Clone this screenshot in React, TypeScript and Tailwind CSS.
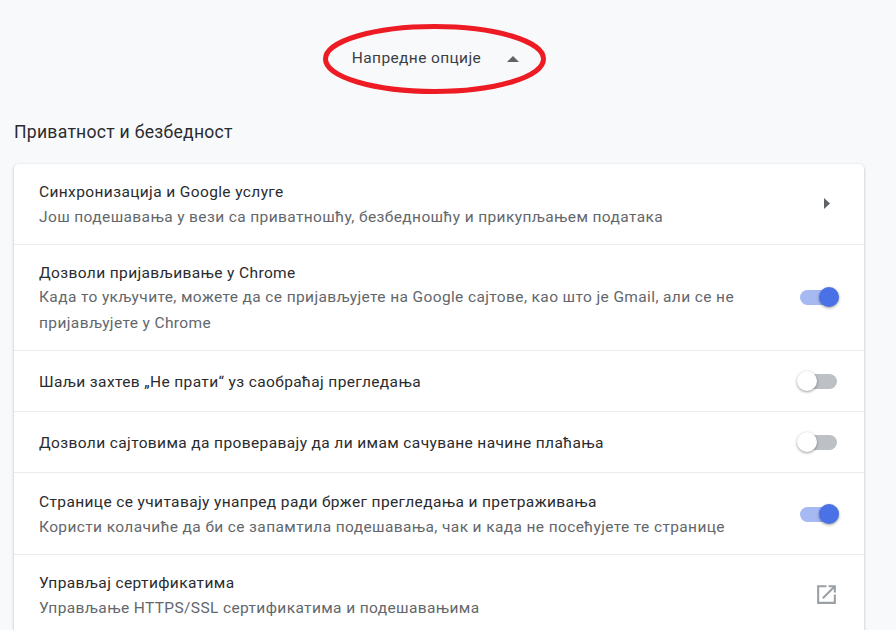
import React from 'react';

function Toggle({ on, className = '' }: { on: boolean; className?: string }) {
  return (
    <div className={`relative w-[37px] h-[15px] shrink-0 ${className}`}>
      <div className={`absolute inset-0 rounded-full ${on ? 'bg-[#a6b9f2]' : 'bg-[#bdc1c6]'}`} />
      <div
        className={`absolute top-[-3px] w-[20px] h-[20px] rounded-full shadow-[0_1px_3px_rgba(0,0,0,0.4)] ${
          on ? 'right-[-2px] bg-[#4a72e6]' : 'left-[-3px] bg-white'
        }`}
      />
    </div>
  );
}

function Row({
  title,
  sub,
  h,
  right,
  last,
  top = 'pt-[2px]',
  gap = 'mt-[1px]',
}: {
  title: string;
  sub?: React.ReactNode;
  h: string;
  right: React.ReactNode;
  last?: boolean;
  top?: string;
  gap?: string;
}) {
  return (
    <div className={`flex items-center pl-[25px] pr-[27px] ${h} ${last ? '' : 'border-b border-[#ebebeb]'}`}>
      <div className={`flex-1 min-w-0 text-[15.5px] tracking-[0.38px] ${top}`}>
        <div className="leading-[22px] text-[#2a2b2e]">{title}</div>
        {sub && <div className={`leading-[26px] text-[#63676c] ${gap}`}>{sub}</div>}
      </div>
      <div className="flex justify-end items-center w-[60px] shrink-0">{right}</div>
    </div>
  );
}

export default function App() {
  return (
    <div className="relative w-[896px] h-[630px] overflow-hidden bg-[#f8f9fb] font-['Roboto',sans-serif]">
      <div className="flex justify-center items-center h-[118px] pr-[25px]">
        <div className="flex items-center gap-[26px]">
          <span className="text-[15.5px] tracking-[0.38px] text-[#3c4043]">Напредне опције</span>
          <svg width="12" height="6" viewBox="0 0 12 6">
            <path d="M0 6 L6 0 L12 6 Z" fill="#5f6368" />
          </svg>
        </div>
      </div>
      <svg className="absolute left-[320px] top-[20px]" width="230" height="78" viewBox="0 0 230 78">
        <ellipse cx="114.500" cy="39" rx="109" ry="32.500" fill="none" stroke="#ed1c24" strokeWidth="5" />
      </svg>

      <h2 className="pl-[14px] h-[46px] text-[17.6px] leading-[28px] tracking-[0.26px] font-normal text-[#2a2b2e]">
        Приватност и безбедност
      </h2>

      <div className="ml-[14px] w-[850px] rounded-[5px] bg-white shadow-[0_1px_3px_rgba(60,64,67,0.35)]">
        <Row
          h="h-[81px]"
          title="Синхронизација и Google услуге"
          sub="Још подешавања у вези са приватношћу, безбедношћу и прикупљањем података"
          right={
            <svg className="mr-[7px] -mt-[2px]" width="6" height="11" viewBox="0 0 6 11">
              <path d="M0 0 L6 5.500 L0 11 Z" fill="#5f6368" />
            </svg>
          }
        />
        <Row
          h="h-[106px]"
          top="pt-[3px]"
          gap="mt-0"
          title="Дозволи пријављивање у Chrome"
          sub={
            <>
              Када то укључите, можете да се пријављујете на Google сајтове, као што је Gmail, али се не
              <br />
              пријављујете у Chrome
            </>
          }
          right={<Toggle on />}
        />
        <Row h="h-[61px]" title="Шаљи захтев „Не прати“ уз саобраћај прегледања" right={<Toggle on={false} />} />
        <Row h="h-[61px]" title="Дозволи сајтовима да проверавају да ли имам сачуване начине плаћања" right={<Toggle on={false} />} />
        <Row
          h="h-[82px]"
          top="pt-[4px]"
          title="Странице се учитавају унапред ради бржег прегледања и претраживања"
          sub="Користи колачиће да би се запамтила подешавања, чак и када не посећујете те странице"
          right={<Toggle on className="mt-[2px]" />}
        />
        <Row
          h="h-[80px]"
          last
          title="Управљај сертификатима"
          sub="Управљање HTTPS/SSL сертификатима и подешавањима"
          right={
            <svg width="25" height="25" viewBox="0 0 24 24" className="-mr-[2px] -mt-[1px]">
              <path
                d="M19 19H5V5h7V3H3v18h18v-9h-2v7zM14 3v2h3.590l-9.830 9.830 1.410 1.410L19 6.410V10h2V3h-7z"
                fill="#9aa0a6"
              />
            </svg>
          }
        />
      </div>
    </div>
  );
}
